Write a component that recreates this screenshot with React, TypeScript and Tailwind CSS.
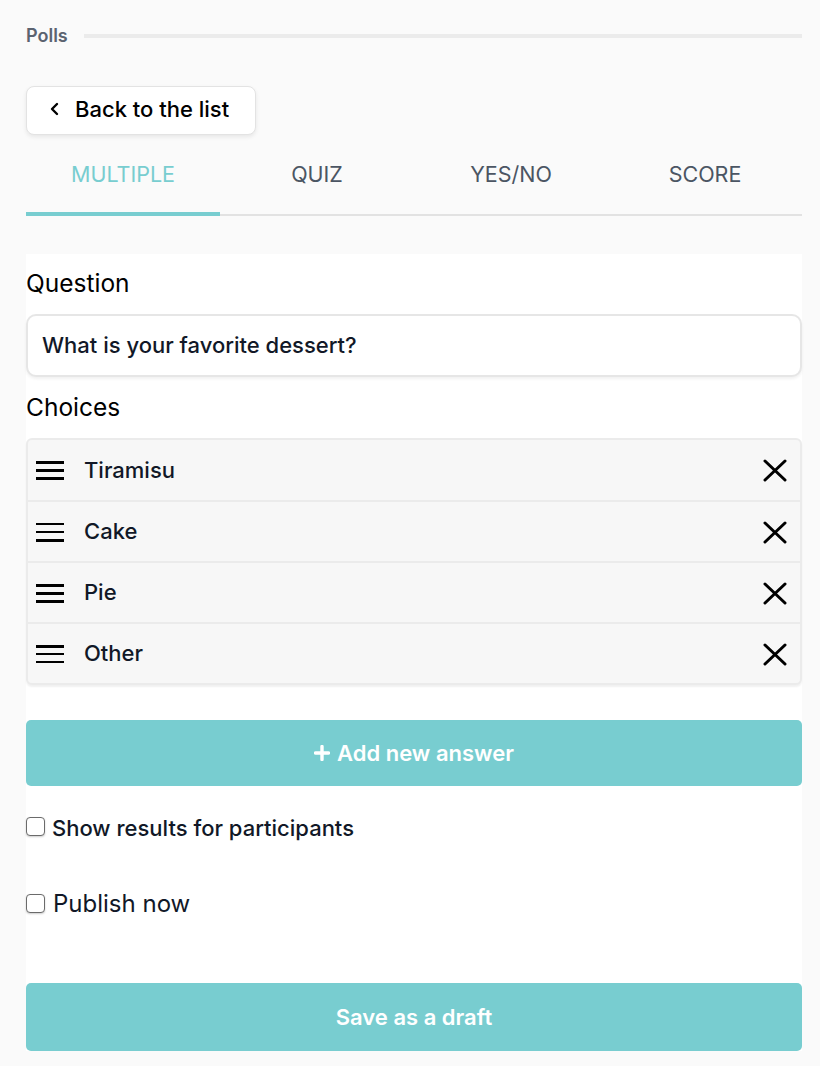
import React from "react";

const choices = [
  { name: "Tiramisu", h: [3, 3, 3] },
  { name: "Cake", h: [2, 2, 3] },
  { name: "Pie", h: [3, 3, 3] },
  { name: "Other", h: [3, 2, 2] },
];

function Handle({ h }: { h: number[] }) {
  return (
    <svg width="28" height="20" viewBox="0 0 28 20" className="shrink-0">
      <rect x="0" y={1} width="28" height={h[0]} fill="#000" />
      <rect x="0" y={9} width="28" height={h[1]} fill="#000" />
      <rect x="0" y={17} width="28" height={h[2]} fill="#000" />
    </svg>
  );
}

function XIcon() {
  return (
    <svg width="24" height="24" viewBox="0 0 24 24" className="shrink-0">
      <path d="M2 3 L22 22 M22 3 L2 22" stroke="#000" strokeWidth="3" strokeLinecap="round" />
    </svg>
  );
}

export default function App() {
  return (
    <div
      className="h-[1066px] overflow-hidden bg-[#fafafa] pl-[26px] pr-[18px] pt-[22px] text-[#111827]"
      style={{ fontFamily: "Inter, 'Noto Sans', sans-serif" }}
    >
      <div className="flex items-center gap-[16px]">
        <span className="text-[18px] font-semibold text-[#5b6370]">Polls</span>
        <div className="h-[4px] flex-1 bg-[#ebebeb]" />
      </div>

      <button className="mt-[37px] flex h-[49px] w-[230px] items-center gap-[14px] rounded-[8px] border border-[#e3e3e3] bg-white pb-[3px] pl-[22px] text-[22px] font-medium text-black shadow-[0_2px_4px_rgba(0,0,0,0.08)]">
        <svg width="12" height="14" viewBox="0 0 12 14">
          <path d="M8 2 L3 7 L8 12" stroke="#000" strokeWidth="2.4" fill="none" strokeLinecap="round" strokeLinejoin="round" />
        </svg>
        Back to the list
      </button>

      <div className="mt-[16px] flex border-b-2 border-[#e2e2e2]">
        {["MULTIPLE", "QUIZ", "YES/NO", "SCORE"].map((t, i) => (
          <div
            key={t}
            className={
              "-mb-[2px] flex h-[65px] flex-1 items-center justify-center border-b-4 pb-[14px] text-[21.5px] " +
              (i === 0 ? "border-[#78cdd0] text-[#78cdd0]" : "border-transparent text-[#4b5563]")
            }
          >
            {t}
          </div>
        ))}
      </div>

      <div className="mt-[38px] bg-white">
        <div className="pt-[14px] text-[24.5px] leading-[30px] text-black">Question</div>
        <div className="mt-[16px] flex h-[63px] items-center rounded-[10px] border-2 border-[#e6e6e6] bg-white pl-[14px] text-[22px] font-medium shadow-[0_2px_3px_rgba(0,0,0,0.06)]">
          What is your favorite dessert?
        </div>
        <div className="mt-[15px] text-[24.5px] leading-[30px] text-black">Choices</div>
        <div className="mt-[16px] overflow-hidden rounded-[6px] border-2 border-[#ebebeb] bg-[#f7f7f7] shadow-[0_2px_2px_rgba(0,0,0,0.06)]">
          {choices.map((c, i) => (
            <div
              key={c.name}
              className={
                "flex items-center pl-[8px] pr-[13px] " +
                (i > 0 ? "h-[61px] border-t-2 border-[#ebebeb]" : "h-[60px]")
              }
            >
              <Handle h={c.h} />
              <span className="ml-[20px] flex-1 text-[22px] font-medium">{c.name}</span>
              <XIcon />
            </div>
          ))}
        </div>

        <button className="mt-[35px] flex h-[66px] w-full items-center justify-center gap-[7px] rounded-[5px] bg-[#78cdd0] text-[22px] font-semibold text-white">
          <svg width="16" height="16" viewBox="0 0 16 16">
            <path d="M8 1.5 V14.5 M1.5 8 H14.5" stroke="#fff" strokeWidth="3.4" strokeLinecap="round" />
          </svg>
          Add new answer
        </button>

        <label className="mt-[26px] flex items-center gap-[7px]">
          <span className="-mt-[4px] h-[19px] w-[19px] rounded-[4px] border-[1.5px] border-[#6b6b6b] bg-white shadow-[0_1px_2px_rgba(0,0,0,0.2)]" />
          <span className="text-[22px] font-medium">Show results for participants</span>
        </label>

        <label className="mt-[41px] flex items-center gap-[8px]">
          <span className="-mt-[2px] h-[19px] w-[19px] rounded-[4px] border-[1.5px] border-[#6b6b6b] bg-white shadow-[0_1px_2px_rgba(0,0,0,0.2)]" />
          <span className="text-[24px]">Publish now</span>
        </label>

        <button className="mt-[61px] flex h-[68px] w-full items-center justify-center rounded-[5px] bg-[#78cdd0] text-[22px] font-semibold text-white">
          Save as a draft
        </button>
      </div>
    </div>
  );
}
